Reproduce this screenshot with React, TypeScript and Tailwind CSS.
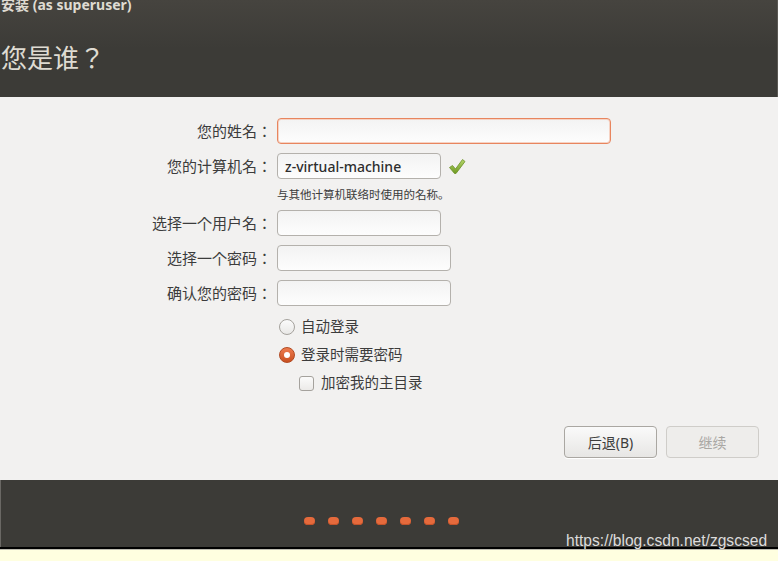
import React from "react";

const font = { fontFamily: '"Noto Sans", "Noto Sans CJK JP", sans-serif' };

function Field({ label, width, focus, value }: { label: string; width: string; focus?: boolean; value?: string }) {
  return (
    <div className="flex items-center h-[26px]">
      <div className="w-[272px] text-right text-[15px] text-[#3c3c3c] leading-none">{label}</div>
      <div
        className={`ml-[5px] h-[26px] rounded-[4px] border bg-gradient-to-b from-[#f3f3f3] to-[#fdfdfd] flex items-center px-[7px] ${width} ${
          focus ? "border-[#e8855e] shadow-[inset_0_0_0_1px_#f6d3c4]" : "border-[#b4b1ac]"
        }`}
      >
        {value && <span className="text-[14px] font-medium text-[#2e2e2e]">{value}</span>}
      </div>
    </div>
  );
}

function Check() {
  return (
    <svg width="18" height="17" viewBox="0 0 18 17" className="ml-[7px]">
      <defs>
        <linearGradient id="g" x1="0" y1="0" x2="0" y2="1">
          <stop offset="0" stopColor="#b5d66a" />
          <stop offset="1" stopColor="#6f9a22" />
        </linearGradient>
      </defs>
      <path
        d="M1.5 9.5 L4.5 7.5 L7.5 11 L14.5 1.5 L17 3.5 L8 15.5 L6.5 15.5 Z"
        fill="url(#g)"
        stroke="#6c9128"
        strokeWidth="0.8"
        strokeLinejoin="round"
      />
    </svg>
  );
}

export default function App() {
  return (
    <div className="w-[778px] h-[561px] flex flex-col overflow-hidden relative bg-[#ffffe0]" style={font}>
      {/* header */}
      <div className="h-[97px] bg-gradient-to-b from-[#46443f] via-[#3c3b37] to-[#3c3b37] border-r border-[#5a5853] flex flex-col">
        <div className="text-[14px] font-bold text-[#dfdbd2] leading-none mt-[-2px] ml-[1px]">安装 (as superuser)</div>
        <div className="text-[26px] text-[#dfdbd2] leading-none mt-[33px] ml-[1px]">您是谁？</div>
      </div>

      {/* content */}
      <div className="h-[383px] bg-[#f2f1f0] flex flex-col pt-[21px]">
        <Field label="您的姓名：" width="w-[334px]" focus />
        <div className="flex items-center mt-[9px]">
          <Field label="您的计算机名：" width="w-[164px]" value="z-virtual-machine" />
          <Check />
        </div>
        <div className="h-[31px] flex items-center pl-[277px] text-[11.5px] text-[#3c3c3c]">与其他计算机联络时使用的名称。</div>
        <Field label="选择一个用户名：" width="w-[164px]" />
        <div className="mt-[9px]">
          <Field label="选择一个密码：" width="w-[174px]" />
        </div>
        <div className="mt-[9px]">
          <Field label="确认您的密码：" width="w-[174px]" />
        </div>

        <div className="flex items-center h-[20px] mt-[11px] pl-[279px] text-[14.5px] text-[#3c3c3c]">
          <span className="w-[16px] h-[16px] rounded-full border border-[#a5a29d] bg-gradient-to-b from-[#fbfbfb] to-[#e9e8e6]" />
          <span className="ml-[6px]">自动登录</span>
        </div>
        <div className="flex items-center h-[20px] mt-[8px] pl-[279px] text-[14.5px] text-[#3c3c3c]">
          <span className="w-[16px] h-[16px] rounded-full border border-[#b24a22] bg-gradient-to-b from-[#ee7c4f] to-[#c9501f] flex items-center justify-center">
            <span className="w-[6px] h-[6px] rounded-full bg-white" />
          </span>
          <span className="ml-[6px]">登录时需要密码</span>
        </div>
        <div className="flex items-center h-[20px] mt-[8px] pl-[299px] text-[14.5px] text-[#3c3c3c]">
          <span className="w-[15px] h-[15px] rounded-[3px] border border-[#a5a29d] bg-gradient-to-b from-[#fbfbfb] to-[#eceae8]" />
          <span className="ml-[7px]">加密我的主目录</span>
        </div>

        <div className="flex-1" />
        <div className="flex justify-end gap-[9px] pr-[19px] pb-[22px]">
          <button className="w-[93px] h-[32px] rounded-[4px] border border-[#aaa7a2] bg-gradient-to-b from-[#fafafa] to-[#e7e6e4] text-[14px] text-[#3c3c3c] shadow-[0_1px_0_#ffffff]">
            后退(B)
          </button>
          <button className="w-[93px] h-[32px] rounded-[4px] border border-[#cfcdc9] bg-[#eeedeb] text-[14px] text-[#a9a7a3]">
            继续
          </button>
        </div>
      </div>

      {/* footer */}
      <div className="h-[67px] bg-[#3c3b37] border-l border-[#6a6864] flex items-end justify-start pl-[303px] pb-[22px] gap-[13px]">
        {[0, 1, 2, 3, 4, 5, 6].map((i) => (
          <span key={i} className="w-[11px] h-[8px] rounded-[4px] bg-[#e56a3c] shadow-[inset_0_-1px_0_#c4532a]" />
        ))}
      </div>
      <div className="h-[2px] bg-black" />
      <div className="h-[1px] bg-[#bdbcb0]" />
      <div className="flex-1 bg-[#ffffe0]" />

      <div
        className="absolute left-[566px] top-[533px] text-[15.6px] text-[#dcdcdc] leading-none"
        style={{ fontFamily: '"Liberation Sans", Arial, sans-serif' }}
      >
        https://blog.csdn.net/zgscsed
      </div>
    </div>
  );
}
